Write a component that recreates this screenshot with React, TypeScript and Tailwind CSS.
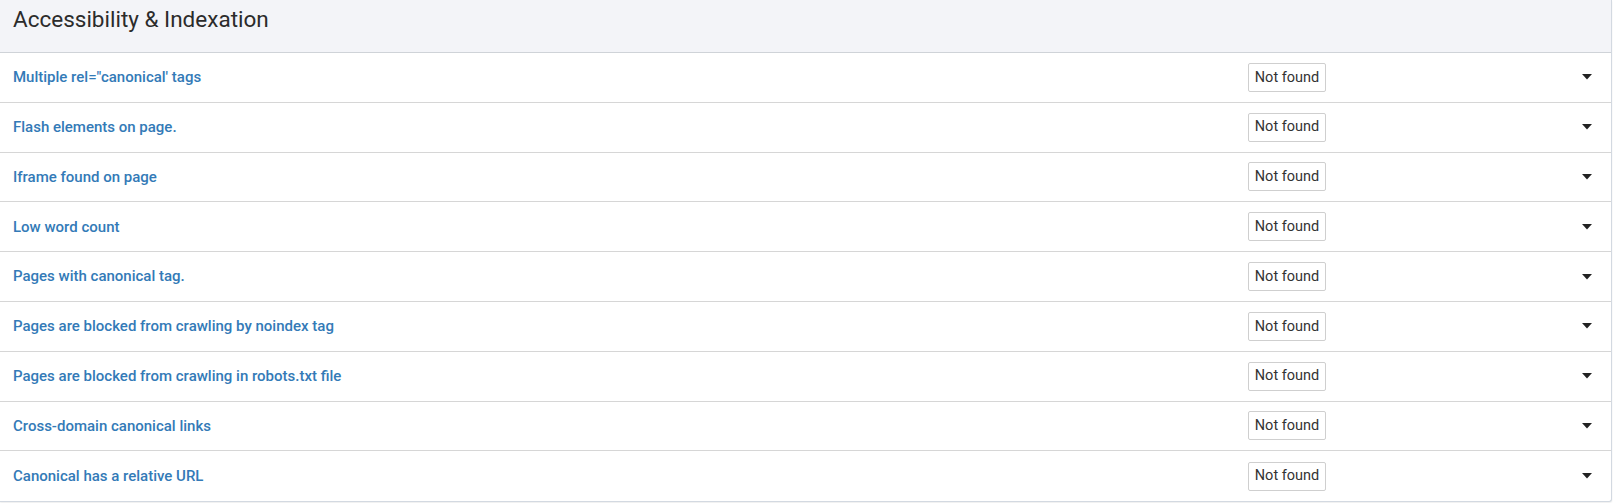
import React from "react";

const rows = [
  `Multiple rel="canonical' tags`,
  "Flash elements on page.",
  "Iframe found on page",
  "Low word count",
  "Pages with canonical tag.",
  "Pages are blocked from crawling by noindex tag",
  "Pages are blocked from crawling in robots.txt file",
  "Cross-domain canonical links",
  "Canonical has a relative URL",
];

export default function App() {
  return (
    <div className="w-[1613px] h-[503px] bg-white" style={{ fontFamily: "Roboto, 'Liberation Sans', sans-serif" }}>
      <div className="w-[1612px] border-r border-b border-[#d3d9e1] rounded-br-[3px] shadow-[0_1px_2px_rgba(0,0,0,0.08)] bg-white">
        <div className="h-[53px] bg-[#f3f4f8] border-b border-[#cfd3d8] flex items-start pt-[8px] pl-[13px]">
          <span className="text-[22.5px] text-[#2b2b2b] leading-none">Accessibility &amp; Indexation</span>
        </div>
        {rows.map((r, i) => (
          <div
            key={i}
            className={`h-[49.8px] flex items-center ${i < rows.length - 1 ? "border-b border-[#d6d6d6]" : ""}`}
          >
            <div className="w-[1248px] pl-[13px] text-[15px] font-medium text-[#337ab7]">{r}</div>
            <div className="w-[78px] h-[29px] border border-[#cfcfcf] rounded-[2px] flex items-center justify-center text-[14.5px] text-[#333]">
              Not found
            </div>
            <div className="flex-1" />
            <svg width="10" height="6" viewBox="0 0 10 6" className="mr-[19px]">
              <path d="M0 0 L10 0 L5 5.5 Z" fill="#222" />
            </svg>
          </div>
        ))}
      </div>
    </div>
  );
}
